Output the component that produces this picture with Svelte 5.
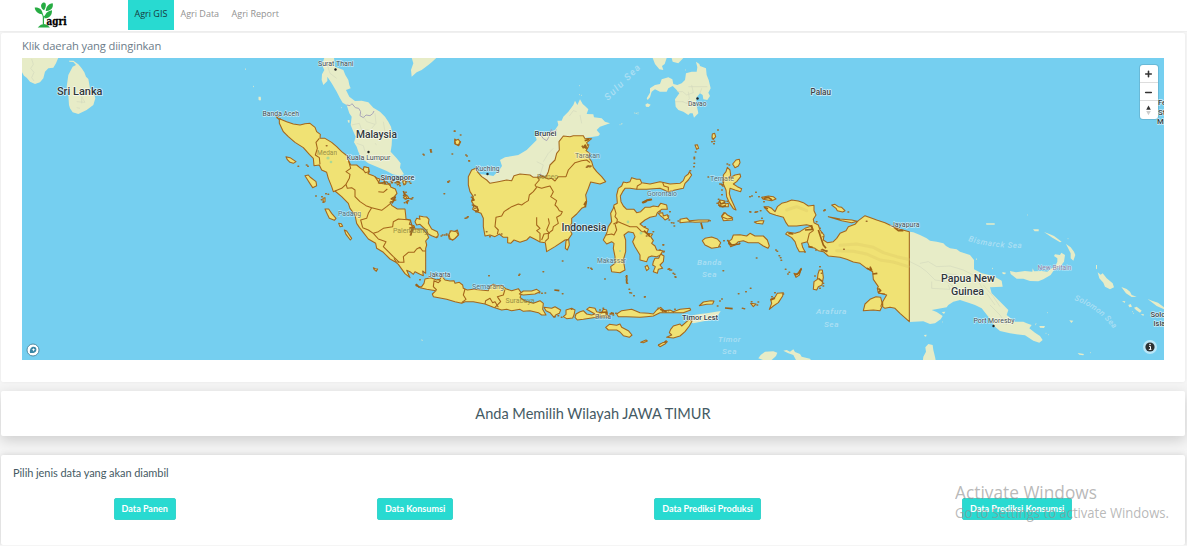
<script>
  const menu = ['Agri GIS', 'Agri Data', 'Agri Report'];
  const actions = ['Data Panen', 'Data Konsumsi', 'Data Prediksi Produksi', 'Data Prediksi Konsumsi'];

  // Each sheet holds coordinates in thirds of a pixel, relative to its own origin.
  const sheets = [
    {
      x: 20, y: 55,
      land: [
        '147,17 160,17 175,28 185,40 193,52 198,65 205,72 210,100 222,115 226,130 220,150 200,165 175,177 158,172 150,160 147,150 145,120 140,95 145,60 158,35 168,30 160,21 148,20',
        '5,8 115,8 108,25 100,38 85,40 75,50 70,70 60,82 45,87 30,80 20,68 12,62 5,50',
        '716,125 722,125 722,136 717,136'
      ],
      relief: ['35,12 40,28 32,40 42,52 35,68 42,78', '170,140 195,142 185,125 185,145', '170,158 180,160'],
      specks: [[676, 42], [700, 94]]
    },
    {
      x: 240, y: 55,
      land: [
        '253,8 282,8 285,35 310,45 316,60 325,75 328,90 332,100 318,105 328,125 345,138 365,137 385,142 400,158 420,170 435,185 445,200 453,215 457,235 455,270 452,290 470,310 482,325 480,338 492,358 478,362 458,358 440,348 410,335 385,325 365,310 355,290 350,275 342,262 347,245 338,225 332,210 335,185 328,175 320,150 308,143 300,130 290,110 275,85 262,65 262,78 250,90 245,75 246,58 253,45 246,30',
        '515,8 590,8 575,22 565,30 545,45 530,52 515,65 513,45 520,25',
        '56,125 62,128 62,136 56,135', '323,195 329,196 328,204 324,202'
      ],
      frontiers: ['320,150 330,152 336,146 346,158 356,160 362,170 360,182 370,188 378,180 390,182 398,176 402,168'],
      relief: ['262,30 270,55 290,70', '335,210 358,205 365,225 385,225', '405,175 408,205 395,220', '350,265 370,272 375,290', '430,200 435,230 425,250', '365,175 380,200 405,208', '405,265 410,270'],
      provinces: [
        '108,182 112,190 120,192 140,200 160,207 180,210 195,206 210,205 225,217 230,230 241,238 240,250 255,250 275,262 290,275 305,290 322,303 326,318 332,330 350,330 362,340 370,345 374,336 385,338 388,350 384,356 400,362 412,370 420,372 415,384 440,388 450,386 452,396 466,402 471,415 463,425 453,432 468,435 450,442 456,452 472,462 495,462 497,480 498,492 512,496 508,508 522,512 525,522 548,522 562,538 566,548 557,558 560,570 557,580 557,655 548,648 550,662 540,658 525,650 520,658 510,650 500,646 510,668 495,656 475,628 465,620 450,612 430,592 410,580 407,565 385,552 372,535 358,517 350,505 345,480 330,460 325,445 305,425 285,408 280,410 275,395 265,370 260,352 245,345 238,330 222,332 220,310 208,298 190,278 165,262 145,245 130,230 118,205 118,195',
        '525,500 530,490 540,493 538,483 550,485 560,486 567,493 565,505 575,522 592,530 595,540 590,548 575,542 565,537 558,525 540,508 530,510',
        '625,540 632,538 630,528 642,530 652,525 656,538 645,550 638,555 628,552',
        '138,305 150,308 168,320 160,325 150,322 142,314', '195,362 205,360 210,366 228,380 230,392 218,398 210,386 203,375',
        '255,462 266,462 275,475 288,490 283,496 268,490 262,478', '296,505 304,506 308,514 300,515', '313,525 320,528 335,550 331,555 318,538', '400,638 406,641 413,642 409,649 402,643',
        '644,252 652,258 662,260 656,272 644,266', '370,345 372,335 386,338 386,350 376,353',
        '452,375 460,378 456,385', '470,380 478,378 480,386 472,390', '488,380 496,375 498,386 492,390', '490,428 500,420 506,428 498,432', '498,440 504,436 502,446', '249,430 255,428 255,440 250,442'
      ],
      borders: [
        '238,250 228,262 232,280 226,300 238,308 240,328', '326,318 332,340 318,350 330,358 328,370 318,388 305,400 285,408', '318,388 322,400 335,398 345,405 345,425 360,440 378,452 395,458',
        '395,458 425,466 440,455 452,445', '395,458 385,475 380,490 362,495 368,518', '400,535 415,530 430,520 458,515 460,500 475,492 512,495',
        '368,518 385,525 400,535 415,552 438,560 430,575 445,590 460,605 478,622', '478,622 492,622 490,605 505,592 522,592 530,582 540,577 548,588 557,588', '415,410 430,412 442,402', '512,498 518,520 510,532', '405,365 418,385 440,380 450,392', '462,610 468,620 478,622', '495,415 500,430 518,432'
      ],
      dots: [[175, 334], [200, 330], [204, 334], [228, 423], [246, 425], [258, 416], [265, 418], [250, 442], [245, 434], [120, 192], [116, 183], [260, 272], [644, 229], [662, 240], [552, 300], [550, 298], [572, 285], [574, 291], [678, 300], [688, 318], [624, 380], [628, 378], [613, 416], [455, 380], [466, 383], [488, 376], [500, 380], [508, 380], [512, 385], [494, 388], [480, 392], [460, 430], [454, 440], [498, 412], [496, 432], [514, 432], [518, 428], [505, 437], [494, 443], [424, 385], [608, 540], [620, 540], [516, 520], [514, 530], [512, 540], [518, 524], [540, 674], [530, 692], [592, 545], [676, 490], [682, 487]],
      thick: ['508,520 520,516 516,528 512,540', '453,432 466,426 456,445', '420,372 432,376 436,388', '470,378 478,384', '572,282 573,292', '490,408 494,418 490,424'],
      specks: [[16, 43], [41, 95], [304, 158], [548, 856], [544, 855]]
    },
    {
      x: 440, y: 80,
      land: [
        '118,282 145,285 160,288 178,270 186,258 180,240 195,232 235,225 260,210 275,195 290,180 286,165 315,160 345,150 355,135 352,122 365,122 370,110 385,95 400,75 405,62 412,75 420,58 428,72 435,78 445,88 440,102 460,103 462,112 485,115 495,125 510,130 480,140 470,150 480,162 475,168 450,172 430,175 370,172 362,190 362,212 350,240 335,255 325,290 300,300 240,292 215,310 150,312'
      ],
      frontiers: ['300,162 310,176 320,182 326,172 330,160 334,148 338,158 350,150', '294,290 300,282 312,290'],
      relief: ['410,95 400,92 388,108', '340,205 325,220 310,245', '290,245 310,255 300,285', '420,105 425,130'],
      provinces: [
        '85,290 95,270 107,265 112,275 125,290 140,300 150,310 175,305 200,300 215,302 222,287 240,282 270,285 280,292 290,292 318,290 325,275 330,255 345,240 350,220 358,210 357,185 370,168 390,170 400,167 430,167 434,175 455,176 440,188 445,200 438,212 450,220 446,232 455,245 460,262 470,275 485,290 497,305 480,312 452,306 445,325 437,345 440,365 435,380 425,385 410,402 395,415 395,430 388,445 396,462 385,478 375,480 345,500 320,515 316,488 300,486 285,478 270,470 260,480 240,487 222,480 212,490 203,488 203,472 190,472 178,462 165,470 150,465 135,468 130,440 130,415 123,400 110,395 98,388 102,375 95,365 100,350 90,335 85,315',
        '378,482 386,478 388,495 382,510 376,505', '45,182 55,178 60,185 55,195 47,192', '27,462 33,452 50,455 55,465 45,475 38,480 30,475',
        '545,318 550,306 560,308 570,305 575,293 590,298 600,298 605,308 630,312 660,305 690,312 720,310 730,302 735,290 745,282 748,275 755,285 745,300 735,310 730,325 705,330 685,335 660,325 620,328 590,328 570,325 555,325 548,335 541,348 543,365 550,378 560,388 582,388 590,398 602,395 615,382 630,382 640,378 655,380 662,370 680,375 682,388 665,388 652,398 648,408 630,412 615,420 600,432 610,440 625,448 620,460 638,462 632,470 640,482 635,490 645,498 650,510 668,512 662,525 650,530 635,528 625,532 620,545 600,540 600,525 585,500 578,485 585,470 580,458 565,455 552,465 557,480 557,515 550,540 555,570 540,578 515,575 512,560 525,550 525,530 520,505 522,490 515,485 500,492 490,480 500,460 505,440 515,425 512,400 520,385 522,375 532,370 530,345 535,325',
        '640,545 645,535 656,535 662,522 672,528 670,545 660,555 668,565 655,568 652,580 640,575 646,560 638,555', '615,560 622,556 627,566 620,572',
        '655,400 668,398 670,408 682,404 686,414 675,420 668,412 662,408'
      ],
      borders: [
        '172,462 175,450 165,440 168,412 185,408 192,395 215,380 235,372 245,375 255,368 265,362 268,345 280,335 290,322', '290,322 285,315 298,300 292,290', '290,320 305,325 315,322 330,318 340,335 335,345 332,350 350,362 345,375 352,382 358,392 367,395 362,405',
        '300,286 325,297 335,295 345,303 355,290 378,290 385,270 405,248 425,242 440,240 450,248', '362,405 350,412 355,430 340,440 338,450 325,460 325,475 315,485', '290,412 290,435 300,445 290,452 300,460 300,485', '325,415 328,430 320,450 328,460 312,462 305,480',
        '520,432 535,425 545,430 570,440 590,440 605,455 615,455 630,465', '522,380 528,400 525,410 532,418 530,432', '498,465 515,462 522,465 530,450 525,432', '590,328 592,318 605,310', '668,308 672,318 685,322 685,332'
      ],
      dots: [[44, 153], [37, 222], [81, 228], [87, 242], [25, 307], [80, 414], [84, 410], [4, 468], [14, 465], [20, 462], [105, 345], [95, 352], [98, 375], [105, 385], [110, 380], [108, 392], [140, 455], [150, 470], [185, 462], [430, 200], [440, 205], [445, 195], [450, 260], [445, 258], [440, 262], [620, 468], [640, 455], [615, 440], [690, 395], [685, 408], [660, 395], [688, 420], [703, 438], [660, 510], [672, 514], [670, 494]],
      thick: ['425,198 440,205 436,195 428,205', '432,375 438,365 436,382', '440,260 455,258', '95,350 102,360 94,362', '98,375 110,380 115,392 106,396', '606,368 622,360 632,358', '434,182 448,178', '610,368 620,364', '612,452 630,470'],
      specks: [[418, 17], [424, 46], [418, 44], [588, 100], [594, 98], [540, 134], [546, 131]]
    },
    {
      x: 440, y: 220,
      provinces: [
        '-73,195 -65,200 -55,200 -48,190 -45,177 -28,173 -10,180 0,178 5,168 15,180 30,183 42,182 45,190 58,187 68,195 70,205 82,210 100,208 145,212 150,198 160,193 172,198 185,196 197,206 215,212 235,206 245,220 240,232 255,243 280,250 300,242 310,250 308,268 318,285 305,285 295,278 270,272 250,274 240,268 215,272 200,268 185,270 160,262 135,252 100,245 75,245 65,250 45,245 20,238 -20,230 -23,222 -12,212 -40,208 -60,203',
        '238,222 250,213 275,213 290,208 300,215 285,222 250,225', '312,262 335,265 345,260 362,270 358,280 347,285 342,292 330,278 318,272', '370,290 378,283 378,270 395,265 405,270 402,285 398,294 380,296',
        '405,292 408,282 420,275 430,272 440,282 455,285 465,282 440,268 448,262 465,265 470,275 485,278 490,268 500,270 502,285 508,292 480,290 450,295 430,298 412,300', '530,282 545,272 575,268 600,278 625,280 640,282 650,270 662,262 672,272 690,270 700,275 720,268 750,265 752,270 730,278 700,278 660,278 640,288 620,290 600,292 560,290 535,290',
        '497,322 508,313 530,316 540,312 545,322 565,332 576,345 568,352 550,347 540,336 530,330 505,330', '602,367 618,360 622,363 610,368'
      ],
      borders: ['-8,178 2,182 -5,188 -18,182 -20,200 -10,210', '65,248 78,238 70,225 75,207', '135,252 137,242 150,235 158,248 165,245 175,262', '195,208 190,225 172,230 182,245 165,262'],
      dots: [[147, 167], [237, 166], [239, 163], [310, 155], [368, 123], [445, 143], [453, 145], [456, 148], [495, 177], [298, 218], [306, 220], [316, 219], [368, 221], [560, 180], [562, 190], [559, 170], [568, 208], [574, 219], [570, 218], [582, 227], [614, 231], [345, 290], [355, 287], [365, 292], [395, 268], [510, 283], [515, 278], [520, 285], [528, 280], [480, 270], [490, 265], [498, 282], [475, 285], [655, 265], [668, 275], [685, 272], [705, 268], [685, 148], [690, 150], [700, 160], [706, 170]],
      thick: ['343,210 358,212', '560,165 560,190', '478,278 500,276 500,285', '510,282 522,280', '660,268 680,276', '-72,192 -62,202', '655,375 670,370 680,362']
    },
    {
      x: 620, y: 60,
      land: [
        '228,5 238,12 240,18 258,25 260,45 266,60 272,85 265,98 270,108 262,120 250,118 248,105 240,100 230,112 228,130 232,145 235,160 222,173 218,160 210,160 205,165 190,155 175,150 167,140 165,118 178,100 168,88 158,78 145,85 140,95 120,95 105,88 95,95 90,112 83,120 80,115 90,98 90,85 105,75 120,72 125,58 145,52 157,58 160,72 172,75 185,70 195,60 198,40 215,35 230,35 232,22',
        '98,-6 105,12 118,28 130,30 126,18 134,12 140,-6', '155,-6 158,5 175,10 190,-6', '76,134 82,130 92,134 86,141 78,140'
      ],
      relief: ['170,95 188,95 200,105 220,98 215,75', '205,80 262,80', '188,125 200,130 230,128', '165,125 190,125', '205,95 208,115 200,130', '245,85 240,100'],
      specks: [[43, 159], [49, 160], [54, 162], [4, 192], [197, 30]],
      provinces: [
        '310,345 318,335 322,322 330,330 332,345 328,355 345,345 360,342 362,350 350,365 340,372 352,380 365,386 362,395 345,390 330,385 328,400 332,415 340,432 348,450 340,446 328,428 320,410 318,390 310,372', '338,312 348,300 358,298 360,308 355,318 345,323',
        '295,430 300,420 312,422 316,432 325,430 325,440 310,440 300,440', '277,222 284,220 287,230 280,238 276,232', '225,255 232,254 236,265 230,268', '305,468 312,458 320,465 335,472 338,480 310,482'
      ],
      dots: [[294, 210], [278, 236], [283, 244], [276, 245], [282, 251], [227, 276], [223, 292], [223, 296], [223, 310], [222, 320], [211, 332], [265, 351], [306, 374], [309, 378], [300, 372], [306, 390], [306, 404], [296, 418], [292, 430], [314, 424], [322, 424], [390, 410], [396, 408], [408, 397], [392, 456], [406, 457], [412, 455], [322, 312], [328, 315], [614, 450], [417, 410], [426, 475]],
      thick: ['302,372 310,376', '68,428 80,422 96,418', '298,422 302,432 315,428', '310,355 310,368', '295,435 308,440 318,437']
    },
    {
      x: 640, y: 190,
      land: [
        '125,385 150,392 158,376 180,372 200,370 242,363 235,375 225,388 190,394 160,400',
        '355,505 362,495 375,485 400,484 412,488 408,498 395,510 380,514', '430,482 440,480 450,485 460,478 465,486 480,492 485,500 510,506 515,514 470,514 460,495 445,490'
      ],
      provinces: [
        '80,442 95,435 88,428 92,418 100,408 120,402 125,408 140,395 148,388 156,393 148,408 135,425 120,438 100,444', '55,466 68,458 82,455 75,462 60,470',
        '187,152 195,145 215,141 232,147 242,158 235,172 215,175 195,165', '265,155 275,148 280,135 300,134 320,138 330,130 345,138 370,138 382,150 388,168 384,175 370,168 355,158 325,158 310,152 295,155 285,165 272,170', '120,88 140,84 148,92 175,90 208,90 204,95 165,97 150,95 120,98', '343,96 360,92 372,92 368,102 350,100',
        '365,22 385,18 400,20 408,27 395,32 370,28', '245,80 255,68 262,75 278,84 262,87', '178,347 190,336 212,332 222,333 218,342 200,343',
        '372,50 385,50 395,55 405,65 412,50 425,40 440,36 455,30 475,33 490,38 505,48 522,46 522,62 528,75 520,88 522,98 535,105 540,120 552,135 550,150 562,158 580,155 590,145 600,130 618,122 625,110 645,103 655,92 675,77 700,86 710,90 735,98 760,110 780,118 808,125 808,395 780,370 765,355 750,352 735,355 728,350 728,335 740,315 715,308 712,295 715,290 700,268 698,245 680,235 660,220 640,216 620,208 600,202 565,198 550,185 535,182 525,175 508,170 502,155 485,160 488,172 495,185 478,185 470,170 465,155 455,143 437,132 442,126 465,130 480,125 495,115 515,108 500,104 470,108 445,108 438,98 430,82 408,76 390,70 380,60',
        '670,362 675,342 690,328 708,320 722,322 728,345 720,362 700,360', '565,80 585,84 600,87 635,90 652,94 635,98 605,92', '575,45 585,43 595,50 605,52 615,62 608,66 592,62 588,55', '538,240 547,240 550,262 546,285 535,290 530,300 520,298 522,275 532,268 534,252', '462,250 472,253 480,240 484,235 478,255 468,262', '388,358 395,340 392,328 405,322 412,310 430,308 428,318 415,338 400,348', '332,340 348,342 340,350'
      ],
      borders: ['515,105 520,122 508,130 502,155', '715,310 735,312', '728,335 722,350'],
      ridges: ['590,182 640,184 680,192 720,210 760,216 805,230', '600,166 650,162 700,172 730,188 770,200 805,208', '440,60 470,50 500,62'],
      dots: [[612, 178], [680, 94], [408, 180], [412, 184], [418, 197], [422, 203], [424, 211], [350, 204], [437, 238], [444, 252], [448, 247], [250, 242], [332, 295], [296, 311], [318, 305], [246, 327], [240, 333], [233, 348], [355, 336], [352, 345], [335, 335], [308, 355], [313, 356], [240, 170], [252, 152], [540, 230], [545, 250], [525, 258], [550, 280], [550, 288], [540, 295], [430, 312], [405, 308], [396, 320], [540, 115], [545, 128], [550, 140], [530, 95], [545, 180], [560, 182], [528, 180], [555, 60], [552, 62], [625, 66], [95, 98], [101, 99], [115, 93], [70, 165], [71, 186], [362, 62], [88, 236], [94, 240], [104, 253], [107, 262], [15, 320], [210, 92], [330, 65], [348, 66], [372, 35], [495, 186]],
      thick: ['183,98 188,117', '262,150 275,165 265,160', '275,165 298,162 300,158', '255,354 278,356', '495,120 518,118 512,106', '465,256 478,248 484,236', '535,120 545,150 550,165 558,175', '545,178 562,185', '680,235 695,240 690,230', '698,252 712,250', '715,295 722,302 714,308', '535,265 548,275', '370,25 385,22 396,30', '372,52 384,56', '392,330 405,325', '505,170 518,172', '760,110 775,122 790,122', '445,130 460,132']
    },
    {
      x: 820, y: 190,
      land: [
        '268,125 280,127 300,135 320,145 330,152 350,155 370,160 378,168 390,175 410,178 420,185 450,195 462,210 462,238 485,250 520,258 545,272 548,290 510,292 515,310 545,340 565,360 560,375 585,395 610,395 620,400 635,405 628,415 645,428 660,438 668,450 658,458 640,452 615,436 570,430 540,423 525,410 505,380 485,355 465,345 450,340 420,330 400,335 385,345 380,352 335,360 350,366 368,378 362,388 345,400 330,402 310,394 268,396',
        '498,100 524,100 524,104 499,104', '308,516 310,500 318,485 316,472 325,462 338,465 340,480 345,500 348,516', '312,435 320,434 318,440 314,439', '365,366 376,365 372,372'
      ],
      relief: ['270,215 300,230 320,245 345,270 380,275 400,290', '300,220 325,215 350,230 390,228 430,240 470,260', '335,275 335,295 390,298 385,285', '490,285 520,320 540,350', '470,265 490,300 480,320', '510,345 540,375 560,405', '380,250 410,255 425,270', '500,310 525,345'],
      frontiers: ['268,280 262,292 268,302'],
      specks: [[470, 208], [518, 235], [368, 396]]
    },
    {
      x: 960, y: 200,
      land: [
        '150,213 168,217 195,213 217,215 218,205 222,214 245,213 262,215 275,205 285,200 292,185 292,175 282,168 285,163 300,165 304,158 315,165 312,185 300,200 282,210 272,225 250,238 235,244 210,243 190,236 170,236 152,222',
        '252,96 268,102 282,108 305,125 300,127 275,112', '318,132 332,142 342,155 346,165 340,182 332,175 332,160', '413,217 422,224 428,220 440,235 458,250 462,262 450,268 435,260 430,248 418,235', '484,261 500,267 510,275 515,285 530,290 515,291 498,280', '563,297 576,302 594,308 612,322 612,328 590,318', '505,315 512,312 516,320 508,322', '522,323 530,320 545,332 540,338 528,330', '219,88 236,88 236,94 224,94', '238,378 255,378 252,384 240,383', '127,216 138,218 135,223 128,222', '328,361 340,362 334,369', '353,459 372,462 370,466 358,464', '408,195 411,195 411,208 408,206', '542,342 552,343 550,348', '486,303 496,304 494,309'
      ],
      specks: [[203, 45], [324, 116], [50, 177], [98, 206], [262, 338], [228, 371], [258, 400], [266, 404], [391, 458], [520, 340], [518, 335], [226, 374]]
    }
  ];

  // Map labels: text, left, baseline, width, size, kind
  const labels = [
    ['Sri Lanka', 57, 95, 45.5, 11, 'country'], ['Malaysia', 356, 138, 41, 11.5, 'country'], ['Indonesia', 561.5, 231, 45, 11.5, 'country'],
    ['Papua New', 941, 282, 54, 11.5, 'country'], ['Guinea', 951, 295, 33, 11.5, 'country'], ['Brunei', 534.5, 135.5, 22, 8, 'state'], ['Palau', 810.5, 95, 20.5, 8.6, 'state'],
    ['Timor Lest', 682, 320, 36, 8, 'state'], ['Singapore', 380.5, 180, 34, 8, 'state'], ['Surat Thani', 318, 66, 35.5, 7.5, 'city'], ['Banda Aceh', 262.5, 116, 36.5, 7.5, 'city'],
    ['Kuala Lumpur', 346.5, 160, 44, 7.8, 'city'], ['Kuching', 475.5, 170.5, 24, 7.5, 'city'], ['Davao', 688, 106, 18.5, 7.5, 'city'], ['Jakarta', 428, 277, 22.5, 7.8, 'city'],
    ['Jayapura', 891, 226.5, 28.5, 7.8, 'city'], ['Port Moresby', 973.5, 322.5, 41, 7.8, 'city'], ['New Britain', 1037.5, 270, 34, 7, 'island'],
    ['Medan', 317, 154.5, 20, 7.5, 'veiled'], ['Padang', 338, 216, 23, 7.5, 'city half'], ['Palembang', 393, 233, 35, 7.5, 'veiled'], ['Semarang', 472, 288.5, 32, 7.5, 'city half'],
    ['Surabaya', 505.5, 303, 29, 7.5, 'veiled'], ['Tarakan', 575, 158, 25, 7.5, 'city half'], ['Borneo', 537, 179, 21, 7, 'veiled'], ['Gorontalo', 647, 196, 30, 7.5, 'city half'],
    ['Ternate', 710, 181, 24, 7.5, 'city half'], ['Makassar', 597, 262.5, 29, 7.5, 'city half'], ['Bima', 595, 319, 16, 7, 'city half'],
    ['Solomon', 1150.5, 316.5, 30, 8, 'state'], ['Islands', 1153.5, 326, 24, 8, 'state'], ['Federated', 1158, 105, 34, 8, 'state'], ['States of', 1158, 114.5, 32, 8, 'state'], ['Micronesia', 1157, 124, 38, 8, 'state'],
    ['Banda', 697, 265, 25, 8, 'sea'], ['Sea', 702, 277, 15, 8, 'sea'], ['Timor', 718, 341.5, 23, 8, 'sea'], ['Sea', 722, 353.5, 15, 8, 'sea'], ['Arafura', 816, 314, 31, 8, 'sea'], ['Sea', 824, 326.5, 15, 8, 'sea']
  ];
  const towns = [[335.5, 69.5], [368.5, 152], [487.5, 174], [697.5, 98.5], [993.5, 326]];

  const line = (p) => 'M' + p;
  const area = (p) => 'M' + p + 'Z';
  const dot = (list) => list.map(([x, y]) => `M${x - 1} ${y}h2`).join('');
</script>

<header>
  <svg class="logo" width="36" height="28" viewBox="0 0 36 28" role="img" aria-label="agri">
    <g fill="#27ac43">
      <path d="M8.8 2.7C12.5 1.2 12.8 6.4 10 10.2 6.2 8.1 6.4 4.2 8.8 2.7Z" />
      <path d="M18.7 3.3C19.8 7.6 16.4 11.7 11.7 11 12 6.7 14.4 3.8 18.7 3.3Z" />
      <path d="M.7 7.5C4.8 7 8.8 9.6 8.5 14.2 3.9 14 1.2 11.5.7 7.5Z" />
      <path d="M18 10.2C18.2 15 15.5 18.2 10.7 18.3 10.7 13.5 13.3 11 18 10.2Z" />
      <path d="M3.7 27.4Q10 20.8 16 27.4Z" />
    </g>
    <path d="M9.4 24.5V17Q9.3 14.5 7 12.6M9.4 19Q9.8 16 14 14" fill="none" stroke="#27ac43" stroke-width="1.2" />
    <text x="12.6" y="24.6" textLength="20" lengthAdjust="spacingAndGlyphs">agri</text>
  </svg>
  <nav>
    {#each menu as item, i}
      <a href="#top" class:active={i === 0}>{item}</a>
    {/each}
  </nav>
</header>

<main>
  <section class="card map-card">
    <p>Klik daerah yang diinginkan</p>
    <div class="map">
      <svg width="1142" height="302" viewBox="22 58 1142 302">
        {#each sheets as s}
          <g transform={`translate(${s.x} ${s.y}) scale(.33333)`}>
            {#each s.land ?? [] as p}<path class="land" d={area(p)} />{/each}
            {#each s.relief ?? [] as p}<path class="relief" d={line(p)} />{/each}
            {#each s.frontiers ?? [] as p}<path class="frontier" d={line(p)} />{/each}
            <path class="speck" d={dot(s.specks ?? [])} />
          </g>
        {/each}
        {#each sheets as s}
          <g transform={`translate(${s.x} ${s.y}) scale(.33333)`}>
            {#each s.provinces ?? [] as p}<path class="province" d={area(p)} />{/each}
            {#each s.ridges ?? [] as p}<path class="ridge" d={line(p)} />{/each}
            {#each s.borders ?? [] as p}<path class="border" d={line(p)} />{/each}
            {#each s.thick ?? [] as p}<path class="coast" d={line(p)} />{/each}
            <path class="dots" d={dot(s.dots ?? [])} />
          </g>
        {/each}
        <g fill="#abd993">
          <circle cx="328" cy="158" r="1.6" /><circle cx="331" cy="162" r="1.3" /><circle cx="628" cy="222" r="1.4" /><circle cx="641" cy="233" r="1.5" /><circle cx="620" cy="251" r="1" />
        </g>
        {#each labels as [text, x, y, w, size, kind]}
          <text class={kind} {x} {y} font-size={size} textLength={w} lengthAdjust="spacingAndGlyphs">{text}</text>
        {/each}
        {#each towns as [x, y]}<circle cx={x} cy={y} r="1.2" fill="#222" />{/each}
        <path id="sulu" d="M608 101L643 66" fill="none" />
        <path id="bismarck" d="M968 241Q995 249 1024 248" fill="none" />
        <path id="solomon" d="M1074 300Q1098 308 1115 331" fill="none" />
        <text class="sea" font-size="9.5"><textPath href="#sulu" textLength="47">Sulu Sea</textPath></text>
        <text class="sea" font-size="8"><textPath href="#bismarck" textLength="55">Bismarck Sea</textPath></text>
        <text class="sea" font-size="8"><textPath href="#solomon" textLength="50">Solomon Sea</textPath></text>
      </svg>
      <div class="zoom">
        <button aria-label="Zoom in"><svg width="18" height="18" viewBox="0 0 18 18"><path d="M5.7 9h5.6M8.5 6.2v5.6" stroke="#333" stroke-width="1.6" stroke-linecap="round" /></svg></button>
        <button aria-label="Zoom out"><svg width="18" height="18" viewBox="0 0 18 18"><path d="M5.7 9.5h5.6" stroke="#333" stroke-width="1.6" stroke-linecap="round" /></svg></button>
        <button aria-label="Reset bearing"><svg width="18" height="18" viewBox="0 0 18 18"><path d="M6.2 8.8L8.5 4.4l2.3 4.4Z" fill="#333" /><path d="M6.2 10L8.5 14.2l2.3-4.2Z" fill="#ccc" /></svg></button>
      </div>
      <svg class="brand" width="14" height="14" viewBox="0 0 14 14"><circle cx="7" cy="7" r="6" fill="#fff" stroke="#49839b" stroke-width=".9" /><path d="M4 10C3.4 6.5 5 3.8 7.6 3.8a2.8 2.8 0 0 1 2.8 2.9C10.4 9.2 7.7 10.5 4 10Z" fill="#3b87a5" /><path d="M7.5 5l.6 1.2 1.3.5-1.3.6-.6 1.2-.6-1.2-1.3-.6 1.3-.5Z" fill="#fff" /></svg>
      <svg class="info" width="14" height="14" viewBox="0 0 14 14"><circle cx="7" cy="7" r="7" fill="#fff" opacity=".5" /><circle cx="7" cy="7" r="4.6" fill="#2c3032" /><path d="M6 6.4h1.5v3M5.8 9.4h2.6" stroke="#fff" stroke-width="1" fill="none" /><circle cx="7" cy="4.5" r=".8" fill="#fff" /></svg>
    </div>
  </section>

  <section class="card chosen">Anda Memilih Wilayah JAWA TIMUR</section>

  <section class="card choices">
    <p>Pilih jenis data yang akan diambil</p>
    <div class="actions">
      {#each actions as a}<button>{a}</button>{/each}
    </div>
  </section>
</main>

<aside>
  <svg width="216" height="42" viewBox="0 0 216 42">
    <text x="0" y="17" font-size="18" textLength="142" lengthAdjust="spacingAndGlyphs">Activate Windows</text>
    <text x="0" y="36" font-size="13.6" textLength="214" lengthAdjust="spacingAndGlyphs">Go to Settings to activate Windows.</text>
  </svg>
</aside>

<style>
  :global(body) { background: #f5f5f5; overflow: hidden; }
  header { display: flex; box-sizing: border-box; height: 32px; padding-left: 34px; background: #fff; border-bottom: 1px solid #efefef; font-family: 'Open Sans', sans-serif; }
  .logo { flex: none; margin-right: 58px; overflow: visible; }
  .logo text { font: 700 10.5px 'DejaVu Serif', serif; stroke: #000; stroke-width: .35; }
  nav { display: flex; }
  nav a { box-sizing: border-box; height: 29.5px; padding: 0 6px 0 6.5px; font-size: 9px; line-height: 28px; white-space: nowrap; color: #929292; text-decoration: none; }
  nav a.active { width: 46px; background: #28dad1; color: #17393c; letter-spacing: 0; }
  main { display: flex; flex-direction: column; padding: 1px 2px 0 1px; }
  .card { box-sizing: border-box; background: #fff; border-radius: 2px; font-family: Lato, sans-serif; color: #455a64; }
  .card p { margin: 0; }
  .map-card { height: 349px; padding: 3px 21px 0; box-shadow: 0 0 3px rgba(0, 0, 0, .06); }
  .map-card p { height: 22px; font: 11.2px/20px 'Open Sans', sans-serif; letter-spacing: -.14px; color: #6c7c89; }
  .map { position: relative; height: 302px; width: 1142px; background: #75cff0; overflow: hidden; }
  .map > svg:first-child { display: block; }
  .land { fill: #e7ecc7; }
  .relief { fill: none; stroke: #cfd5bb; stroke-width: 2.6; opacity: .6; stroke-linejoin: round; }
  .ridge { fill: none; stroke: #dccb66; stroke-width: 9; opacity: .38; stroke-linejoin: round; stroke-linecap: round; }
  .frontier { fill: none; stroke: #a9a5b8; stroke-width: 3; }
  .speck { stroke: #dfe8cb; stroke-width: 3; }
  .province { fill: #f0e274; stroke: #a4671d; stroke-width: 3.2; stroke-linejoin: round; }
  .border { fill: none; stroke: #a4641a; stroke-width: 3.2; stroke-linejoin: round; }
  .coast { fill: none; stroke: #9c6116; stroke-width: 5; stroke-linejoin: round; }
  .dots { fill: none; stroke: #a06e2c; stroke-width: 4.6; stroke-linecap: round; }
  .map text { font-family: Roboto, sans-serif; paint-order: stroke; stroke-linejoin: round; }
  .map .country { font-weight: 500; fill: #30373b; stroke: rgba(255, 255, 255, .7); stroke-width: 1.5; }
  .map .state { font-weight: 500; fill: #394246; stroke: rgba(255, 255, 255, .7); stroke-width: 1.4; }
  .map .city { fill: #454e52; stroke: rgba(255, 255, 255, .6); stroke-width: 1.3; }
  .map .half { opacity: .75; }
  .map .veiled { fill: #857c3a; opacity: .8; }
  .map .island { fill: #8a82a6; stroke: rgba(255, 255, 255, .6); stroke-width: 1; }
  .map .sea { fill: #acdff3; font-style: italic; font-weight: 500; letter-spacing: .5px; }
  .zoom { position: absolute; top: 7px; right: 6px; width: 18px; border-radius: 3px; background: #fff; box-shadow: 0 0 0 1px rgba(0, 0, 0, .1); overflow: hidden; }
  .zoom button { display: block; width: 18px; height: 18px; padding: 0; border: 0; background: none; }
  .zoom button + button { box-shadow: 0 -1px #ddd; }
  .zoom svg { display: block; }
  .brand { position: absolute; left: 4px; bottom: 3px; }
  .info { position: absolute; right: 7px; bottom: 6px; }
  .chosen { height: 45px; margin-top: 9px; font-size: 14.55px; line-height: 45px; text-align: center; box-shadow: 0 4px 14px rgba(0, 0, 0, .17); }
  .choices { height: 90px; margin-top: 19px; padding: 10px 12px 0; box-shadow: 0 0 6px rgba(0, 0, 0, .16); }
  .choices p { font-size: 11px; line-height: 15px; letter-spacing: -.06px; }
  .actions { display: flex; justify-content: space-around; margin-top: 18px; }
  .actions button { height: 22px; padding: 0 7px; border: 1px solid #37d4cc; border-radius: 2px; background: #28dad1; color: #fff; font: 700 9px/20px Lato, sans-serif; }
  aside { position: absolute; left: 955px; top: 482px; width: 216px; height: 42px; pointer-events: none; }
  aside svg { display: block; }
  aside text { font-family: 'Open Sans', sans-serif; fill: rgba(145, 145, 145, .65); }
</style>
